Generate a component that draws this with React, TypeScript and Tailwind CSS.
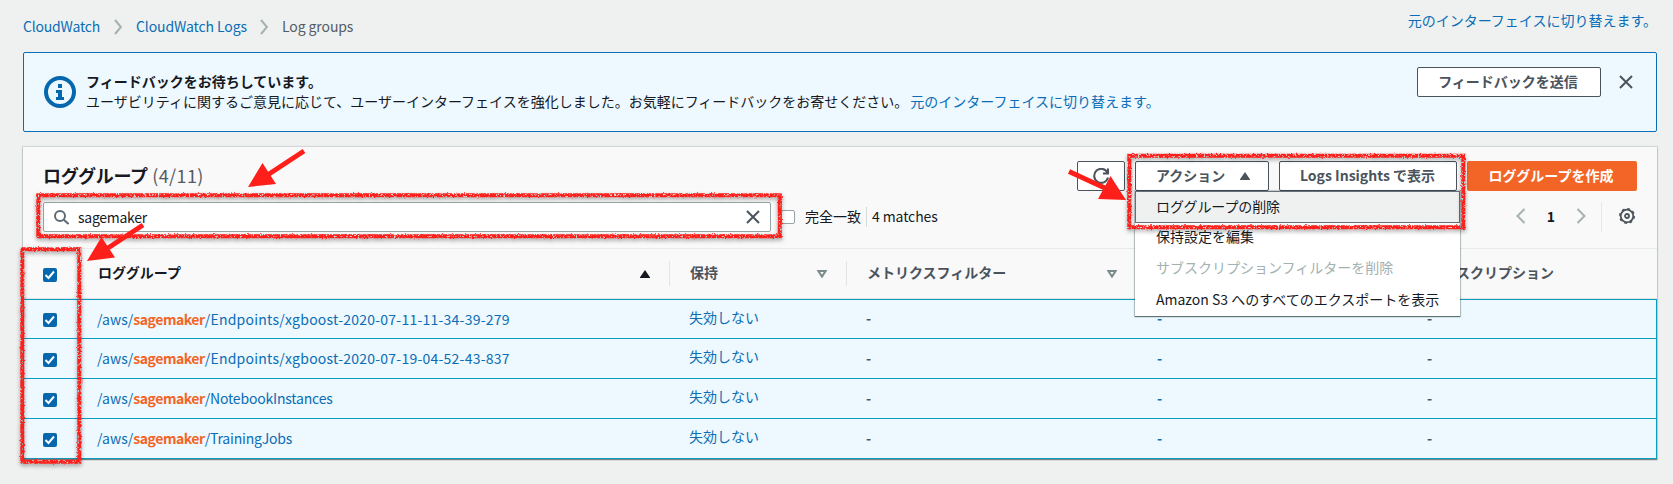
import React from "react";

const FONT = "font-['Noto_Sans_CJK_JP','Noto_Sans',sans-serif]";
const LINK = "text-[#0a6db5]";

function Crumb() {
  return (
    <svg width="8" height="16" viewBox="0 0 8 16" fill="none" stroke="#a2b1b1" strokeWidth="2">
      <path d="M1 1l6 7-6 7" />
    </svg>
  );
}

function Close() {
  return (
    <svg width="14" height="14" viewBox="0 0 14 14" fill="none" stroke="#4b535c" strokeWidth="2">
      <path d="M1 1l12 12M13 1L1 13" />
    </svg>
  );
}

function Checked() {
  return (
    <span className="block h-[14px] w-[14px] rounded-[2px] bg-[#0568ae]">
      <svg width="14" height="14" viewBox="0 0 14 14" fill="none" stroke="#fff" strokeWidth="2">
        <path d="M2.5 7l3 3L11 3.5" />
      </svg>
    </span>
  );
}

function SortOpen() {
  return (
    <svg width="10" height="8" viewBox="0 0 10 8" fill="none" stroke="#7b8a8b" strokeWidth="2">
      <path d="M1.4 1h7.2L5 6.6z" />
    </svg>
  );
}

function TriUp({ color }: { color: string }) {
  return (
    <svg width="10" height="8" viewBox="0 0 10 8" fill={color}>
      <path d="M5 0l5 7.2v.8H0v-.8z" />
    </svg>
  );
}

const rows = [
  { name: "/Endpoints/xgboost-2020-07-11-11-34-39-279", tracking: "tracking-[0.23px]" },
  { name: "/Endpoints/xgboost-2020-07-19-04-52-43-837", tracking: "tracking-[0.23px]" },
  { name: "/NotebookInstances", tracking: "tracking-[-0.19px]" },
  { name: "/TrainingJobs", tracking: "tracking-[-0.2px]" },
];

const BTN =
  "flex h-[30px] items-center rounded-[2px] border border-[#4b535c] bg-white pb-[2px] text-[14px] leading-[20px] font-bold text-[#4b535c]";

export default function App() {
  return (
    <div className={`${FONT} relative h-[484px] w-[1673px] overflow-hidden bg-[#eff1f0] text-[14px] leading-[20px] text-[#16191f]`}>
      <div className="flex h-[52px] items-start justify-between pl-[23px] pr-[16px]">
        <nav className="mt-[16px] flex h-[20px] items-center">
          <span className={`tracking-[-0.2px] ${LINK}`}>CloudWatch</span>
          <span className="ml-[14px] mr-[14px] mt-[2px]"><Crumb /></span>
          <span className={`tracking-[-0.1px] ${LINK}`}>CloudWatch Logs</span>
          <span className="ml-[13px] mr-[14px] mt-[2px]"><Crumb /></span>
          <span className="tracking-[-0.1px] text-[#545b64]">Log groups</span>
        </nav>
        <a className={`mt-[10px] ${LINK}`}>元のインターフェイスに切り替えます。</a>
      </div>

      <section className="ml-[23px] flex h-[80px] w-[1634px] rounded-[2px] border border-[#0a6db5] bg-[#edf8ff]">
        <svg className="ml-[20px] mt-[23px]" width="32" height="32" viewBox="0 0 32 32">
          <circle cx="16" cy="16" r="14" fill="none" stroke="#0568ae" strokeWidth="4" />
          <path fill="#0568ae" d="M14 8h4v4h-4zM12 14h6v7h2v3h-8v-3h2v-4h-2z" />
        </svg>
        <div className="ml-[10px] mt-[18px] flex-1">
          <p className="font-bold">フィードバックをお待ちしています。</p>
          <p>
            ユーザビリティに関するご意見に応じて、ユーザーインターフェイスを強化しました。お気軽にフィードバックをお寄せください。
            <a className={`ml-[2px] ${LINK}`}>元のインターフェイスに切り替えます。</a>
          </p>
        </div>
        <button className={`${BTN} mt-[14px] w-[184px] justify-center pr-[2px]`}>フィードバックを送信</button>
        <span className="ml-[18px] mr-[23px] mt-[22px]"><Close /></span>
      </section>

      <section className="relative ml-[23px] mt-[15px] w-[1634px] bg-[#f9f9f9] shadow-[0_1px_1px_0_rgba(0,28,36,0.45),0_0_1px_1px_rgba(0,28,36,0.12)]">
        <header className="flex h-[55px] items-start pl-[20px] pr-[20px] pt-[14px]">
          <h1 className="mt-[2px] text-[18px] leading-[24px] font-bold tracking-[-0.3px]">ロググループ</h1>
          <span className="mt-[2px] whitespace-pre text-[18px] leading-[24px] tracking-[0.4px] text-[#545b64]"> (4/11)</span>
          <div className="ml-auto flex gap-[10px]">
            <button className={`${BTN} w-[48px] justify-center`}>
              <svg className="mt-[2px]" width="16" height="16" viewBox="0 0 16 16" fill="none" stroke="#4b535c" strokeWidth="2">
                <path d="M10 5.5h5V.5M14.6 5A7 7 0 1 0 15 9.5" />
              </svg>
            </button>
            <button className={`${BTN} w-[134px] pl-[20px]`}>
              アクション<span className="ml-[15px] mt-[2px]"><TriUp color="#4b535c" /></span>
            </button>
            <button className={`${BTN} w-[178px] justify-center pr-[1px]`}>Logs Insights で表示</button>
            <button className="flex h-[30px] w-[170px] items-center justify-center rounded-[2px] bg-[#f26527] pr-[2px] pb-[2px] text-[14px] leading-[20px] font-bold text-white">
              ロググループを作成
            </button>
          </div>
        </header>

        <div className="flex h-[46px] items-start pl-[20px] pr-[22px]">
          <div className="flex h-[30px] w-[728px] items-center rounded-[2px] border border-[#95a5a6] bg-white pl-[10px] pr-[10px]">
            <svg width="15" height="15" viewBox="0 0 15 15" fill="none" stroke="#5f6b75" strokeWidth="2">
              <circle cx="6" cy="6" r="5" />
              <path d="M9.5 9.5l5 4.5" />
            </svg>
            <span className="ml-[9px] tracking-[-0.27px]">sagemaker</span>
            <span className="ml-auto"><Close /></span>
          </div>
          <span className="ml-[10px] mt-[8px] h-[14px] w-[14px] rounded-[2px] border border-[#95a5a6] bg-white" />
          <span className="ml-[10px] mt-[4px]">完全一致</span>
          <span className="ml-[5px] mt-[5px] h-[20px] w-px bg-[#d5dbdb]" />
          <span className="ml-[5px] mt-[4px] tracking-[-0.1px]">4 matches</span>
          <div className="ml-auto flex h-[30px] items-center">
            <svg className="mt-[-3px]" width="10" height="16" viewBox="0 0 10 16" fill="none" stroke="#a2b1b1" strokeWidth="2"><path d="M8.5 1l-7 7 7 7" /></svg>
            <span className="mt-[-3px] w-[50px] text-center font-bold">1</span>
            <svg className="mt-[-3px]" width="10" height="16" viewBox="0 0 10 16" fill="none" stroke="#a2b1b1" strokeWidth="2"><path d="M1.5 1l7 7-7 7" /></svg>
            <span className="ml-[15px] mr-[17px] h-[30px] w-px bg-[#e3e7e7]" />
            <svg className="mt-[-2px]" width="16" height="16" viewBox="0 0 16 16" fill="none" stroke="#4b535c">
              <circle cx="8" cy="8" r="6.3" strokeWidth="1.8" />
              <circle cx="8" cy="8" r="7.3" strokeWidth="1.4" strokeDasharray="2.87 2.87" />
              <circle cx="8" cy="8" r="2" strokeWidth="1.8" />
            </svg>
          </div>
        </div>

        <div className="flex h-[51px] items-center border-y border-t-[#e6eaea] border-b-[#e0e4e4] font-bold text-[#4b535c]">
          <span className="ml-[20px] mt-[3px] w-[55px]"><Checked /></span>
          <div className="flex w-[571px] items-center pr-[19px] text-[#16191f]">
            <span className="mt-[-3px] flex-1">ロググループ</span><TriUp color="#16191f" />
          </div>
          <div className="flex h-[25px] w-[177px] items-center border-l border-[#e0e4e4] pl-[20px] pr-[19px]">
            <span className="mt-[-3px] flex-1">保持</span><SortOpen />
          </div>
          <div className="flex h-[25px] w-[291px] items-center border-l border-[#e0e4e4] pl-[20px] pr-[20px]">
            <span className="mt-[-3px] flex-1">メトリクスフィルター</span><SortOpen />
          </div>
          <div className="h-[25px] w-[270px] border-l border-[#e0e4e4]" />
          <div className="flex h-[25px] items-center border-l border-[#e0e4e4] pl-[20px]">
            <span className="mt-[-3px]">サブスクリプション</span>
          </div>
        </div>

        {rows.map((r, i) => (
          <div key={r.name} className={`flex h-[40px] items-center border-x border-b border-[#0d9dc0] bg-[#edf8ff] ${i === 0 ? "border-t" : ""}`}>
            <span className="ml-[19px] mt-[2px] w-[54px]"><Checked /></span>
            <span className={`mt-[-1px] w-[592px] ${LINK}`}>
              <span>/aws/</span>
              <b className="tracking-[-0.45px] text-[#f26527]">sagemaker</b>
              <span className={r.tracking}>{r.name}</span>
            </span>
            <span className={`mt-[-5px] w-[177px] ${LINK}`}>失効しない</span>
            <span className="mt-[-2px] w-[291px] font-bold text-[#4b535c]">-</span>
            <span className={`mt-[-2px] w-[270px] font-bold ${LINK}`}>-</span>
            <span className="mt-[-2px] font-bold text-[#4b535c]">-</span>
          </div>
        ))}

        <div className="absolute left-[1112px] top-[44px] w-[325px] bg-white pb-[2px] shadow-[0_1px_1px_0_rgba(0,28,36,0.5),0_0_1px_1px_rgba(0,28,36,0.2)]">
          <div className="flex h-[32px] items-center border border-[#687078] bg-[#eff1f0] pb-[3px] pl-[20px] tracking-[-0.1px]">ロググループの削除</div>
          <div className="flex h-[31px] items-center pb-[5px] pl-[21px]">保持設定を編集</div>
          <div className="flex h-[31px] items-center pb-[5px] pl-[21px] text-[#a2b1b1]">サブスクリプションフィルターを削除</div>
          <div className="flex h-[29px] items-center pb-[2px] pl-[21px]">Amazon S3 へのすべてのエクスポートを表示</div>
        </div>
      </section>

      <svg className="absolute left-0 top-0" width="1673" height="484" viewBox="0 0 1673 484">
        <defs>
          <filter id="chalk" filterUnits="userSpaceOnUse" x="0" y="0" width="1673" height="484" colorInterpolationFilters="sRGB">
            <feTurbulence type="fractalNoise" baseFrequency="0.55" numOctaves="2" seed="4" result="n" />
            <feDisplacementMap in="SourceGraphic" in2="n" scale="2.6" xChannelSelector="R" yChannelSelector="G" result="d" />
            <feColorMatrix in="n" type="matrix" values="0 0 0 0 0  0 0 0 0 0  0 0 0 0 0  0 0 -6 0 4.4" result="holes" />
            <feComposite in="d" in2="holes" operator="in" result="r" />
            <feDropShadow in="r" dx="0" dy="2" stdDeviation="2" floodColor="#000" floodOpacity="0.4" />
          </filter>
        </defs>
        <g fill="none" stroke="#ff1f1a" strokeWidth="4" filter="url(#chalk)">
          <path d="M38.300 195.300h741.500v41H38.300z" />
          <path d="M22.300 249.300h57v212.500H22.300z" />
          <path d="M1129.300 155.800h334v71.500h-334z" />
        </g>
        <g fill="#ff1f1a" stroke="#ff1f1a">
          <path strokeWidth="5" d="M304 151L266 176M143 225L105 250M1069 171.500L1107 189" />
          <path stroke="none" d="M248 187l14.500-24 13.500 21zM87 261l14.500-24 13.500 20.500zM1126 200l-28-1 12.500-23z" />
        </g>
      </svg>
    </div>
  );
}
